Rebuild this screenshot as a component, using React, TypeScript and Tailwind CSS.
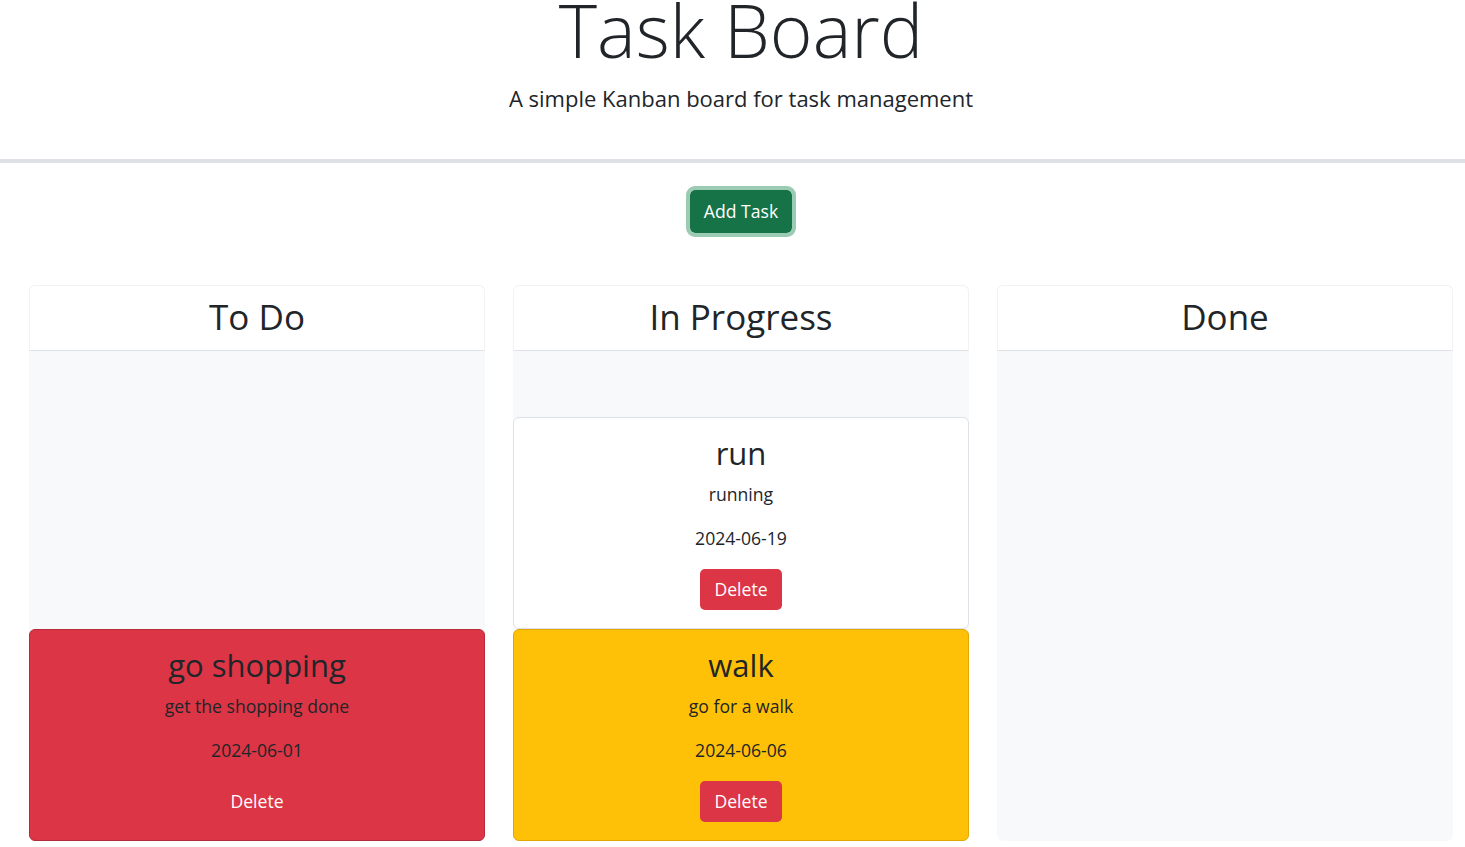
type Task = {
  title: string;
  description: string;
  date: string;
  tone: "white" | "red" | "yellow";
};

const columns: { name: string; tasks: Task[] }[] = [
  {
    name: "To Do",
    tasks: [
      { title: "go shopping", description: "get the shopping done", date: "2024-06-01", tone: "red" },
    ],
  },
  {
    name: "In Progress",
    tasks: [
      { title: "run", description: "running", date: "2024-06-19", tone: "white" },
      { title: "walk", description: "go for a walk", date: "2024-06-06", tone: "yellow" },
    ],
  },
  { name: "Done", tasks: [] },
];

const toneClass = {
  white: "bg-white border-[#dee2e6]",
  red: "bg-[#dc3545] border-[#b52b38]",
  yellow: "bg-[#ffc107] border-[#e0a800]",
};

function TaskCard({ task }: { task: Task }) {
  return (
    <div className={`border rounded-[6px] pt-4 pb-[18px] flex flex-col items-center text-center ${toneClass[task.tone]}`}>
      <h3 className="text-[31px] leading-[38px] mb-2">{task.title}</h3>
      <p className="text-[17.6px] leading-[28px] mb-4">{task.description}</p>
      <p className="text-[17.6px] leading-[28px] mb-[17px]">{task.date}</p>
      <button className="h-[41px] px-[14px] rounded-[5px] bg-[#dc3545] text-white text-[17.6px]">
        Delete
      </button>
    </div>
  );
}

export default function App() {
  return (
    <div
      className="min-h-screen bg-white text-[#212529] overflow-hidden"
      style={{ fontFamily: '"Open Sans", "Noto Sans", sans-serif' }}
    >
      <div className="w-[1482px]">
        <header className="flex flex-col items-center">
          <h1 className="text-[73px] leading-[60px] font-light">Task Board</h1>
          <p className="text-[22px] leading-[30px] mt-[23px]">A simple Kanban board for task management</p>
        </header>
        <div className="h-[4px] bg-[#dee2e6] mt-[46px]" />

        <div className="flex justify-center mt-[27px]">
          <button className="h-[43px] px-[14px] rounded-[5px] bg-[#157347] text-white text-[17.6px] outline-4 outline-[#9ccbb4]">
            Add Task
          </button>
        </div>

        <div className="flex gap-[28px] px-[29px] mt-[52px]">
          {columns.map((col) => (
            <div key={col.name} className="w-[456px] flex flex-col">
              <div className="h-[66px] pb-[4px] flex items-center justify-center bg-white border border-[#f2f2f2] border-b-[#dee2e6] rounded-t-[6px]">
                <h2 className="text-[35px] leading-[43px]">{col.name}</h2>
              </div>
              <div className="h-[490px] bg-[#f8f9fa] flex flex-col justify-end rounded-b-[6px]">
                {col.tasks.map((t) => (
                  <TaskCard key={t.title} task={t} />
                ))}
              </div>
            </div>
          ))}
        </div>
      </div>
    </div>
  );
}
